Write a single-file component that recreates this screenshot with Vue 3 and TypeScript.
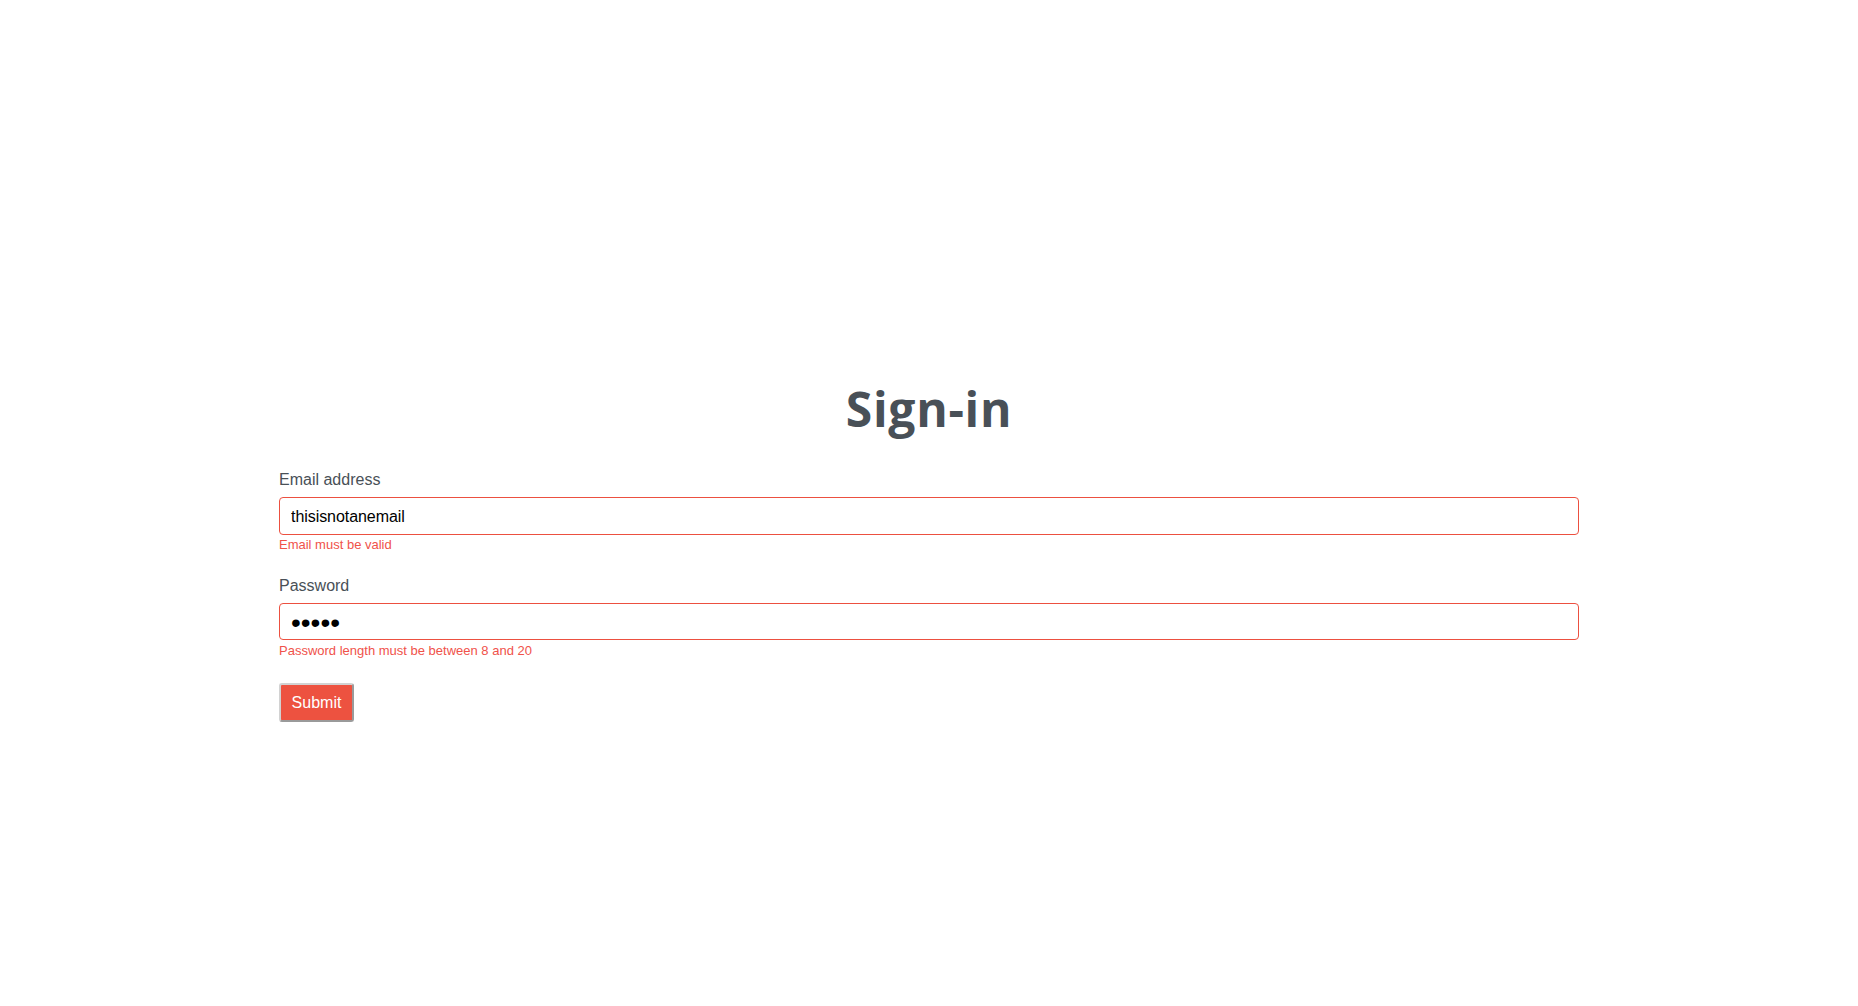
<script setup lang="ts">
const email: string = "thisisnotanemail";
const password: string = "12345";
</script>

<template>
  <main class="page">
    <h1 class="title">Sign-in</h1>
    <form class="form" @submit.prevent>
      <div class="field">
        <label class="label" for="email">Email address</label>
        <input id="email" class="control" type="text" :value="email" />
        <small class="error">Email must be valid</small>
      </div>
      <div class="field">
        <label class="label" for="password">Password</label>
        <input id="password" class="control secret" type="password" :value="password" />
        <small class="error">Password length must be between 8 and 20</small>
      </div>
      <button class="submit" type="submit">Submit</button>
    </form>
  </main>
</template>

<style>
html, body { margin: 0; background: #fff; }
</style>

<style scoped>
.page {
  width: 1300px;
  margin: 0 auto;
  padding-top: 376px;
  font-family: "Liberation Sans", Arial, sans-serif;
  color: #495057;
}
.title {
  margin: 0 0 26px;
  text-align: center;
  font-family: "Open Sans", "Noto Sans", sans-serif;
  font-size: 48px;
  line-height: 66px;
  font-weight: 700;
  letter-spacing: 0.7px;
  color: #495057;
}
.form { display: flex; flex-direction: column; align-items: flex-start; }
.field { width: 100%; margin-bottom: 19.6px; }
.label { display: block; font-size: 16px; line-height: 24px; margin-bottom: 5px; }
.control {
  display: block;
  box-sizing: border-box;
  width: 100%;
  height: 37.6px;
  padding: 7px 11px 5px;
  border: 1px solid #ec5040;
  border-radius: 4px;
  background: #fff;
  color: #000;
  font: 16px/24px "Liberation Sans", Arial, sans-serif;
  letter-spacing: -0.06px;
  outline: none;
}
.secret { font-size: 28px; letter-spacing: 0; }
.error {
  display: block;
  padding-top: 0.6px;
  font-size: 13px;
  line-height: 19px;
  color: #f0524a;
}
.submit {
  box-sizing: border-box;
  width: 75px;
  height: 39.4px;
  margin-top: 3px;
  padding: 1px 0 0;
  border-style: solid;
  border-width: 2px;
  border-color: #d2d2d2 #9a9a9a #9a9a9a #d2d2d2;
  border-radius: 3px;
  background: #ed5240;
  color: #fff;
  font: 16px/24px "Liberation Sans", Arial, sans-serif;
}
</style>
